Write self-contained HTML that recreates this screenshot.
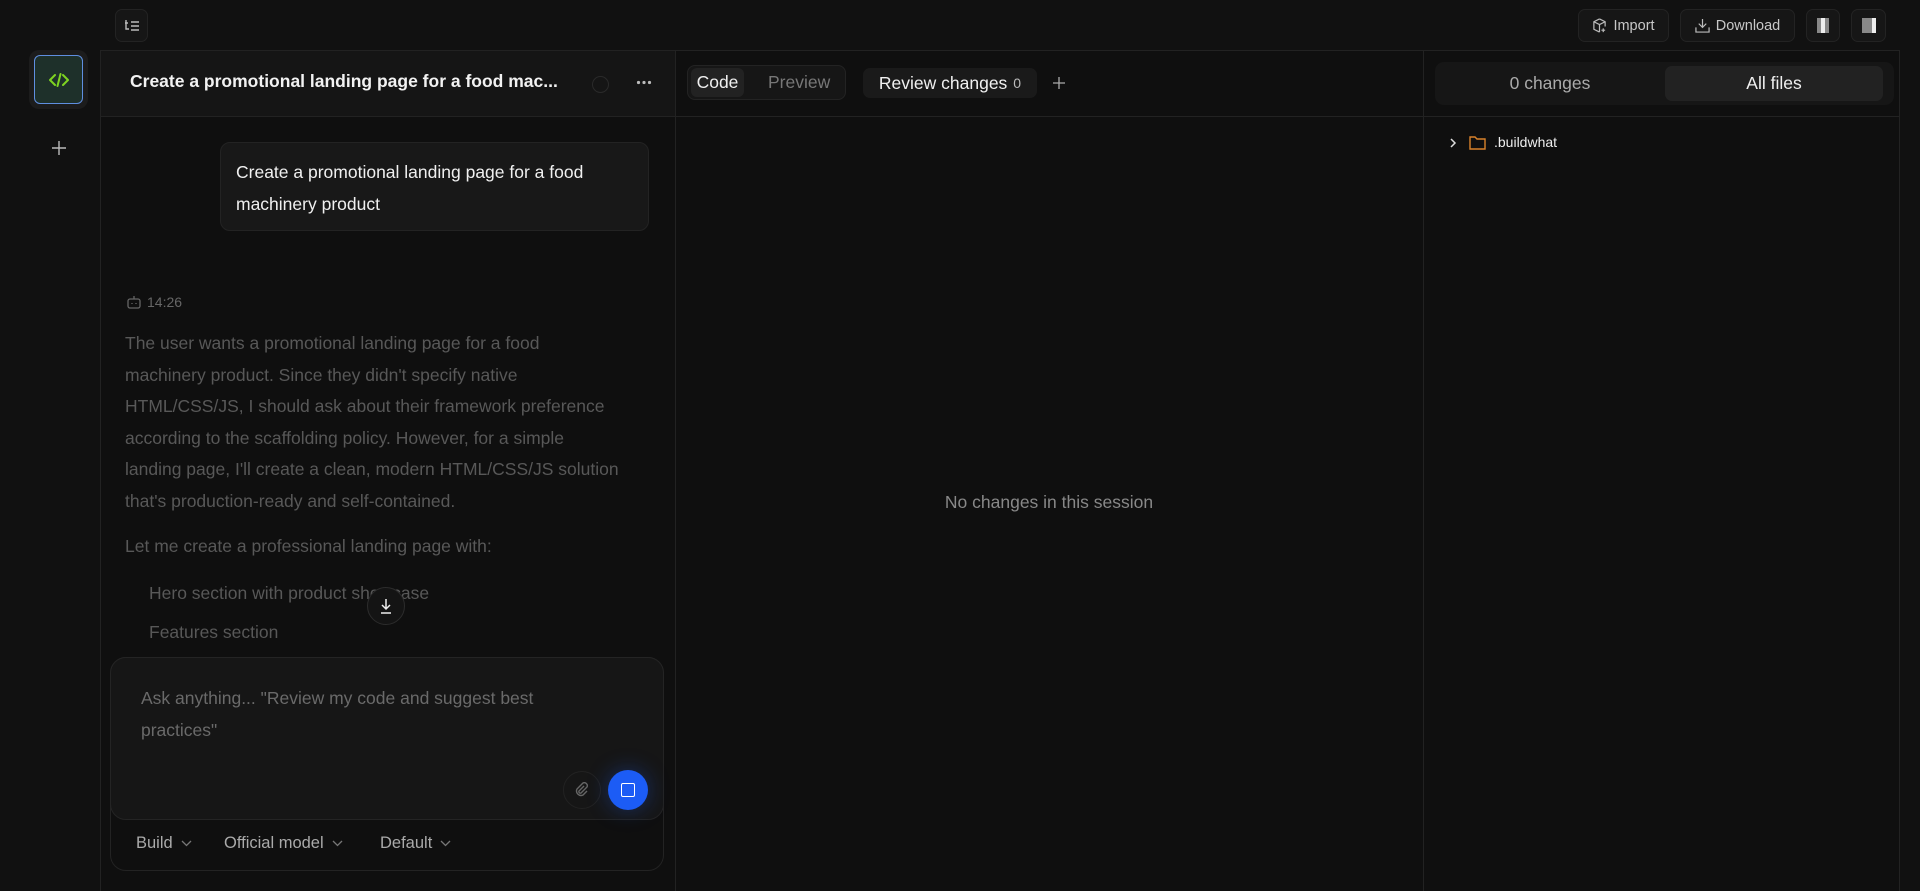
<!DOCTYPE html>
<html><head><meta charset="utf-8"><style>
*{box-sizing:border-box;margin:0;padding:0}
body{width:1920px;height:891px;background:#111;font-family:"Liberation Sans",sans-serif;color:#e8e8e8;position:relative;overflow:hidden}
.abs{position:absolute}
.btn{position:absolute;background:#161616;border:1px solid #232323;border-radius:7px;display:flex;align-items:center;justify-content:center;gap:6px;font-size:14.5px;color:#c8c8c8}
.panel{position:absolute;top:50px;height:841px;background:#0f0f0f;border-top:1px solid #222}
.hline{position:absolute;height:1px;background:#222}
p.t{position:absolute;left:125px;width:560px;font-size:17.5px;line-height:31.5px;color:#585858;white-space:nowrap}
.dd{font-size:16.5px;color:#aaa;white-space:nowrap;display:flex;align-items:center;gap:8px}
</style></head><body>
<!-- top bar -->
<div class="btn" style="left:115px;top:9px;width:33px;height:33px">
<svg width="16" height="14" viewBox="0 0 16 14" fill="none" stroke="#bbb" stroke-width="1.4"><path d="M2 1v9h3M1 4h3M7 3h8M7 7h8M7 11h8"/></svg></div>
<div class="btn" style="left:1578px;top:9px;width:91px;height:33px"><svg width="15" height="15" viewBox="0 0 16 16" fill="none" stroke="#bbb" stroke-width="1.3"><path d="M8 1l6 3v5M8 1L2 4v8l6 3M2 4l6 3 6-3M8 7v8"/><path d="M12 11v4M10 13h4"/></svg>Import</div>
<div class="btn" style="left:1680px;top:9px;width:115px;height:33px"><svg width="15" height="15" viewBox="0 0 16 16" fill="none" stroke="#bbb" stroke-width="1.3"><path d="M8 1v9M4 6l4 4 4-4M1 10v5h14v-5"/></svg>Download</div>
<div class="btn" style="left:1806px;top:9px;width:34px;height:33px;gap:0"><div style="width:4px;height:15px;background:#888"></div><div style="width:4px;height:15px;background:#eee"></div><div style="width:4px;height:15px;background:#888"></div></div>
<div class="btn" style="left:1851px;top:9px;width:35px;height:33px;gap:0"><div style="width:10px;height:15px;background:#888"></div><div style="width:4px;height:15px;background:#eee"></div></div>
<!-- rail -->
<div class="abs" style="left:29px;top:50px;width:59px;height:59px;background:#1c1c1c;border-radius:10px"></div>
<div class="abs" style="left:34px;top:55px;width:49px;height:49px;background:#1e302a;border:1.5px solid #5f8fe0;border-radius:6px;display:flex;align-items:center;justify-content:center">
<svg width="20" height="16" viewBox="0 0 20 16" fill="none" stroke="#7ed321" stroke-width="2" stroke-linecap="round" stroke-linejoin="round"><path d="M6 3L1 8l5 5M14 3l5 5-5 5M11.5 2L8.5 14"/></svg></div>
<svg class="abs" style="left:51px;top:140px" width="16" height="16" viewBox="0 0 16 16" stroke="#bbb" stroke-width="1.4"><path d="M8 1v14M1 8h14"/></svg>
<!-- chat panel -->
<div class="panel" style="left:100px;width:575px;border-left:1px solid #222"></div>
<div class="abs" style="left:101px;top:51px;width:574px;height:65px;background:#151515"></div>
<div class="hline" style="left:100px;top:116px;width:1800px"></div>
<div class="abs" style="left:130px;top:71px;font-size:17.5px;font-weight:bold;color:#f2f2f2;white-space:nowrap">Create a promotional landing page for a food mac...</div>
<div class="abs" style="left:592px;top:76px;width:17px;height:17px;border:1.5px solid #2a2a2a;border-radius:50%"></div>
<svg class="abs" style="left:636px;top:80px" width="16" height="5" viewBox="0 0 16 5" fill="#bbb"><circle cx="2.5" cy="2.5" r="1.6"/><circle cx="8" cy="2.5" r="1.6"/><circle cx="13.5" cy="2.5" r="1.6"/></svg>
<div class="abs" style="left:220px;top:142px;width:429px;height:89px;background:#181818;border:1px solid #232323;border-radius:10px"></div>
<div class="abs" style="left:236px;top:156px;width:410px;font-size:17.5px;line-height:32px;color:#f0f0f0;white-space:nowrap">Create a promotional landing page for a food<br>machinery product</div>
<svg class="abs" style="left:126px;top:294px" width="16" height="16" viewBox="0 0 16 16" fill="none" stroke="#666" stroke-width="1.3"><rect x="2" y="5" width="12" height="9" rx="2"/><path d="M8 5V2M6 9v1M10 9v1"/></svg>
<div class="abs" style="left:147px;top:294px;font-size:14px;color:#666">14:26</div>
<p class="t" style="top:328px">The user wants a promotional landing page for a food<br>machinery product. Since they didn't specify native<br>HTML/CSS/JS, I should ask about their framework preference<br>according to the scaffolding policy. However, for a simple<br>landing page, I'll create a clean, modern HTML/CSS/JS solution<br>that's production-ready and self-contained.</p>
<p class="t" style="top:531px">Let me create a professional landing page with:</p>
<p class="t" style="top:578px;left:149px">Hero section with product showcase</p>
<p class="t" style="top:617px;left:149px">Features section</p>
<div class="abs" style="left:367px;top:587px;width:38px;height:38px;border-radius:50%;background:#141414;border:1px solid #2c2c2c;display:flex;align-items:center;justify-content:center">
<svg width="16" height="16" viewBox="0 0 16 16" fill="none" stroke="#eee" stroke-width="1.5"><path d="M8 1v10M4 7l4 4 4-4M3 15h10"/></svg></div>
<!-- input -->
<div class="abs" style="left:110px;top:657px;width:554px;height:214px;border:1px solid #232323;border-radius:16px;background:#0f0f0f"></div>
<div class="abs" style="left:110px;top:657px;width:554px;height:163px;border:1px solid #242424;border-radius:16px;background:#161616"></div>
<div class="abs" style="left:141px;top:682px;width:480px;font-size:17.5px;line-height:32px;color:#6a6a6a;white-space:nowrap">Ask anything... "Review my code and suggest best<br>practices"</div>
<div class="abs" style="left:563px;top:771px;width:38px;height:38px;border-radius:50%;border:1px solid #222;display:flex;align-items:center;justify-content:center">
<svg width="16" height="16" viewBox="0 0 16 16" fill="none" stroke="#666" stroke-width="1.4"><path d="M10 4l-5 5a1.5 1.5 0 002 2l6-6a3 3 0 00-4-4L3 7a4.5 4.5 0 006 6l4-4"/></svg></div>
<div class="abs" style="left:608px;top:770px;width:40px;height:40px;border-radius:50%;background:#1c5cf5;box-shadow:0 0 22px rgba(28,92,245,.35);display:flex;align-items:center;justify-content:center"><div style="width:14px;height:14px;border:1.8px solid #fff;border-radius:2px"></div></div>
<div class="abs dd" style="left:136px;top:834px">Build <svg width="11" height="7" viewBox="0 0 11 7" fill="none" stroke="#777" stroke-width="1.3"><path d="M1 1l4.5 4.5L10 1"/></svg></div>
<div class="abs dd" style="left:224px;top:834px">Official model <svg width="11" height="7" viewBox="0 0 11 7" fill="none" stroke="#777" stroke-width="1.3"><path d="M1 1l4.5 4.5L10 1"/></svg></div>
<div class="abs dd" style="left:380px;top:834px">Default <svg width="11" height="7" viewBox="0 0 11 7" fill="none" stroke="#777" stroke-width="1.3"><path d="M1 1l4.5 4.5L10 1"/></svg></div>
<!-- middle -->
<div class="panel" style="left:675px;width:748px;border-left:1px solid #222"></div>
<div class="hline" style="left:675px;top:116px;width:1225px"></div>
<div class="abs" style="left:687px;top:65px;width:159px;height:35px;background:#161616;border:1px solid #232323;border-radius:8px"></div>
<div class="abs" style="left:691px;top:68px;width:53px;height:29px;background:#222;border-radius:6px;font-size:17.5px;color:#f0f0f0;display:flex;align-items:center;justify-content:center">Code</div>
<div class="abs" style="left:768px;top:72px;font-size:17.5px;color:#777">Preview</div>
<div class="abs" style="left:863px;top:68px;width:174px;height:30px;background:#1a1a1a;border-radius:7px;font-size:17.5px;color:#f0f0f0;display:flex;align-items:center;justify-content:center;gap:6px">Review changes <span style="font-size:14px;color:#bbb">0</span></div>
<svg class="abs" style="left:1052px;top:76px" width="14" height="14" viewBox="0 0 14 14" stroke="#aaa" stroke-width="1.3"><path d="M7 1v12M1 7h12"/></svg>
<div class="abs" style="left:675px;top:492px;width:748px;text-align:center;font-size:17.5px;color:#888">No changes in this session</div>
<!-- right -->
<div class="panel" style="left:1423px;width:477px;border-left:1px solid #222;border-right:1px solid #222"></div>
<div class="hline" style="left:1423px;top:116px;width:477px"></div>
<div class="abs" style="left:1435px;top:62px;width:459px;height:43px;background:#161616;border-radius:9px"></div>
<div class="abs" style="left:1665px;top:66px;width:218px;height:35px;background:#222;border-radius:7px"></div>
<div class="abs" style="left:1435px;top:73px;width:230px;text-align:center;font-size:17.5px;color:#aaa">0 changes</div>
<div class="abs" style="left:1665px;top:73px;width:218px;text-align:center;font-size:17.5px;color:#f0f0f0">All files</div>
<svg class="abs" style="left:1448px;top:137px" width="10" height="12" viewBox="0 0 10 12" fill="none" stroke="#ddd" stroke-width="1.5"><path d="M3 2l4 4-4 4"/></svg>
<svg class="abs" style="left:1469px;top:135px" width="17" height="15" viewBox="0 0 17 15" fill="none" stroke="#d9822b" stroke-width="1.4"><path d="M1 2h5l2 2h8v10H1z"/></svg>
<div class="abs" style="left:1494px;top:134px;font-size:14px;color:#eee">.buildwhat</div>
</body></html>
